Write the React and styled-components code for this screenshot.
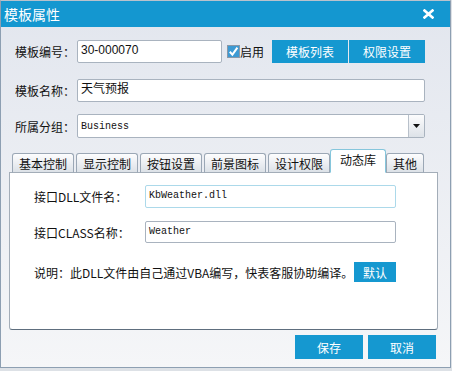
import React from 'react';
import styled, { createGlobalStyle } from 'styled-components';

const GlobalStyle = createGlobalStyle`
  html, body {
    margin: 0;
    padding: 0;
    background: #dde1e6;
  }
  body {
    font-family: "Noto Sans CJK SC", "Liberation Sans", sans-serif;
    font-size: 12px;
    color: #111;
  }
`;

const Dialog = styled.div`
  width: 451px;
  height: 368px;
  box-sizing: border-box;
  border: 1px solid #8d9fb2;
  border-top-color: #b9c2cc;
  display: flex;
  flex-direction: column;
  background: linear-gradient(#e2e6ee, #f5f6f8);
`;

const TitleBar = styled.div`
  height: 26px;
  flex: none;
  background: #1497d0;
  color: #fff;
  display: flex;
  align-items: center;
  justify-content: space-between;
  padding: 0 16px 0 3px;
  font-size: 14px;
`;

const Body = styled.div`
  flex: 1;
  display: flex;
  flex-direction: column;
  padding: 0 12px 0 8px;
`;

const Form = styled.div`
  padding: 13px 13px 0 6px;
`;

const FieldRow = styled.div`
  display: flex;
  align-items: center;
  height: ${props => props.$h || 23}px;
  margin-top: ${props => props.$gap || 0}px;
`;

const Label = styled.div`
  width: ${props => props.$w}px;
  flex: none;
  white-space: nowrap;
`;

const TextBox = styled.div`
  box-sizing: border-box;
  height: ${props => props.$h || 23}px;
  width: ${props => (props.$w ? `${props.$w}px` : 'auto')};
  flex: ${props => (props.$w ? 'none' : 1)};
  border: 1px solid ${props => (props.$focus ? '#acd9ea' : '#a9b3bf')};
  border-radius: 2px;
  background: #fff;
  padding: 1px 3px 0;
  line-height: 17px;
  font-family: ${props => (props.$mono ? '"Liberation Mono", monospace' : '"Liberation Sans", "Noto Sans CJK SC", sans-serif')};
  font-size: ${props => (props.$mono ? 10 : 12)}px;
  display: flex;
  align-items: flex-start;
  justify-content: space-between;
  overflow: hidden;
`;

const CheckLabel = styled.label`
  display: flex;
  align-items: center;
  flex: none;
  white-space: nowrap;
  margin-left: 5px;
  width: 37px;
`;

const BlueButton = styled.button`
  width: ${props => props.$w}px;
  height: ${props => props.$h}px;
  margin-left: ${props => props.$ml || 0}px;
  border: none;
  padding: 0;
  background: #1598d0;
  color: #fff;
  font-family: "Noto Sans CJK SC", sans-serif;
  font-size: 12px;
  flex: none;
`;

const DropButton = styled.div`
  width: 15px;
  align-self: stretch;
  margin: -1px -3px 0 0;
  border-left: 1px solid #b8c0ca;
  background: linear-gradient(#fcfcfd, #dde2e8);
  display: flex;
  align-items: center;
  justify-content: center;
`;

const TabBar = styled.div`
  display: flex;
  align-items: flex-end;
  gap: 2px;
  height: 23px;
  margin-top: 12px;
  margin-bottom: -1px;
  padding-left: 3px;
  position: relative;
  z-index: 1;
`;

const Tab = styled.div`
  box-sizing: border-box;
  height: ${props => (props.$active ? 24 : 20)}px;
  padding: ${props => (props.$active ? '0 9px 3px' : '0 6px')};
  margin: ${props => (props.$active ? '0 -2px' : '0')};
  border: 1px solid ${props => (props.$active ? '#86c6dc' : '#9ba7b5')};
  border-bottom-color: ${props => (props.$active ? '#fff' : '#a3adb8')};
  border-radius: 3px 3px 0 0;
  background: ${props => (props.$active ? '#fff' : 'linear-gradient(#fdfdfe, #dce1e7)')};
  display: flex;
  align-items: center;
  font-size: 12px;
  white-space: nowrap;
  position: relative;
  z-index: ${props => (props.$active ? 2 : 1)};
`;

const Panel = styled.div`
  height: 158px;
  box-sizing: border-box;
  border: 1px solid #a3adb8;
  border-bottom-color: #5e6e7e;
  border-radius: 0 0 3px 3px;
  background: #fff;
  padding: 12px 0 0 24px;
`;

const PanelRow = styled.div`
  display: flex;
  align-items: center;
  justify-content: space-between;
  width: 362px;
  height: ${props => props.$h || 23}px;
  margin-top: ${props => props.$gap || 0}px;
`;

const Footer = styled.div`
  display: flex;
  justify-content: flex-end;
  gap: 5px;
  margin-top: 5px;
  padding-right: 2px;
`;

const CloseIcon = () => (
  <svg width="11" height="10" viewBox="0 0 11 10">
    <path d="M1.5 1.5 L9.5 8.5 M9.5 1.5 L1.5 8.5" stroke="#fff" strokeWidth="2.6" strokeLinecap="square" />
  </svg>
);

const CheckIcon = () => (
  <svg width="13" height="13" viewBox="0 0 13 13">
    <rect x="0.5" y="0.5" width="12" height="12" fill="#3d9ad3" stroke="#8a98a8" />
    <path d="M2.8 6.8 L5.4 9.6 L10.4 2.6" stroke="#fff" strokeWidth="2" fill="none" />
  </svg>
);

const Caret = () => (
  <svg width="7" height="4" viewBox="0 0 7 4">
    <path d="M0 0 H7 L3.5 4 Z" fill="#111" />
  </svg>
);

const tabs = ['基本控制', '显示控制', '按钮设置', '前景图标', '设计权限', '动态库', '其他'];

export default function App() {
  return (
    <>
      <GlobalStyle />
      <Dialog>
        <TitleBar>
          <span>模板属性</span>
          <CloseIcon />
        </TitleBar>
        <Body>
          <Form>
            <FieldRow>
              <Label $w={62}>模板编号：</Label>
              <TextBox $w={145}>30-000070</TextBox>
              <CheckLabel>
                <CheckIcon />
                启用
              </CheckLabel>
              <BlueButton $w={76} $h={23} $ml={8}>模板列表</BlueButton>
              <BlueButton $w={76} $h={23} $ml={1}>权限设置</BlueButton>
            </FieldRow>
            <FieldRow $gap={16}>
              <Label $w={62}>模板名称：</Label>
              <TextBox>天气预报</TextBox>
            </FieldRow>
            <FieldRow $gap={12} $h={24}>
              <Label $w={62}>所属分组：</Label>
              <TextBox $mono $h={24}>
                <span style={{ paddingTop: 2 }}>Business</span>
                <DropButton>
                  <Caret />
                </DropButton>
              </TextBox>
            </FieldRow>
          </Form>

          <TabBar>
            {tabs.map(t => (
              <Tab key={t} $active={t === '动态库'}>{t}</Tab>
            ))}
          </TabBar>
          <Panel>
            <PanelRow>
              <Label $w={111}>接口DLL文件名：</Label>
              <TextBox $w={251} $mono $focus>KbWeather.dll</TextBox>
            </PanelRow>
            <PanelRow $gap={13} $h={22}>
              <Label $w={111}>接口CLASS名称：</Label>
              <TextBox $w={251} $h={22} $mono>Weather</TextBox>
            </PanelRow>
            <PanelRow $gap={19} $h={20}>
              <span>说明：此DLL文件由自己通过VBA编写，快表客服协助编译。</span>
              <BlueButton $w={42} $h={20}>默认</BlueButton>
            </PanelRow>
          </Panel>

          <Footer>
            <BlueButton $w={68} $h={24}>保存</BlueButton>
            <BlueButton $w={68} $h={24}>取消</BlueButton>
          </Footer>
        </Body>
      </Dialog>
    </>
  );
}
